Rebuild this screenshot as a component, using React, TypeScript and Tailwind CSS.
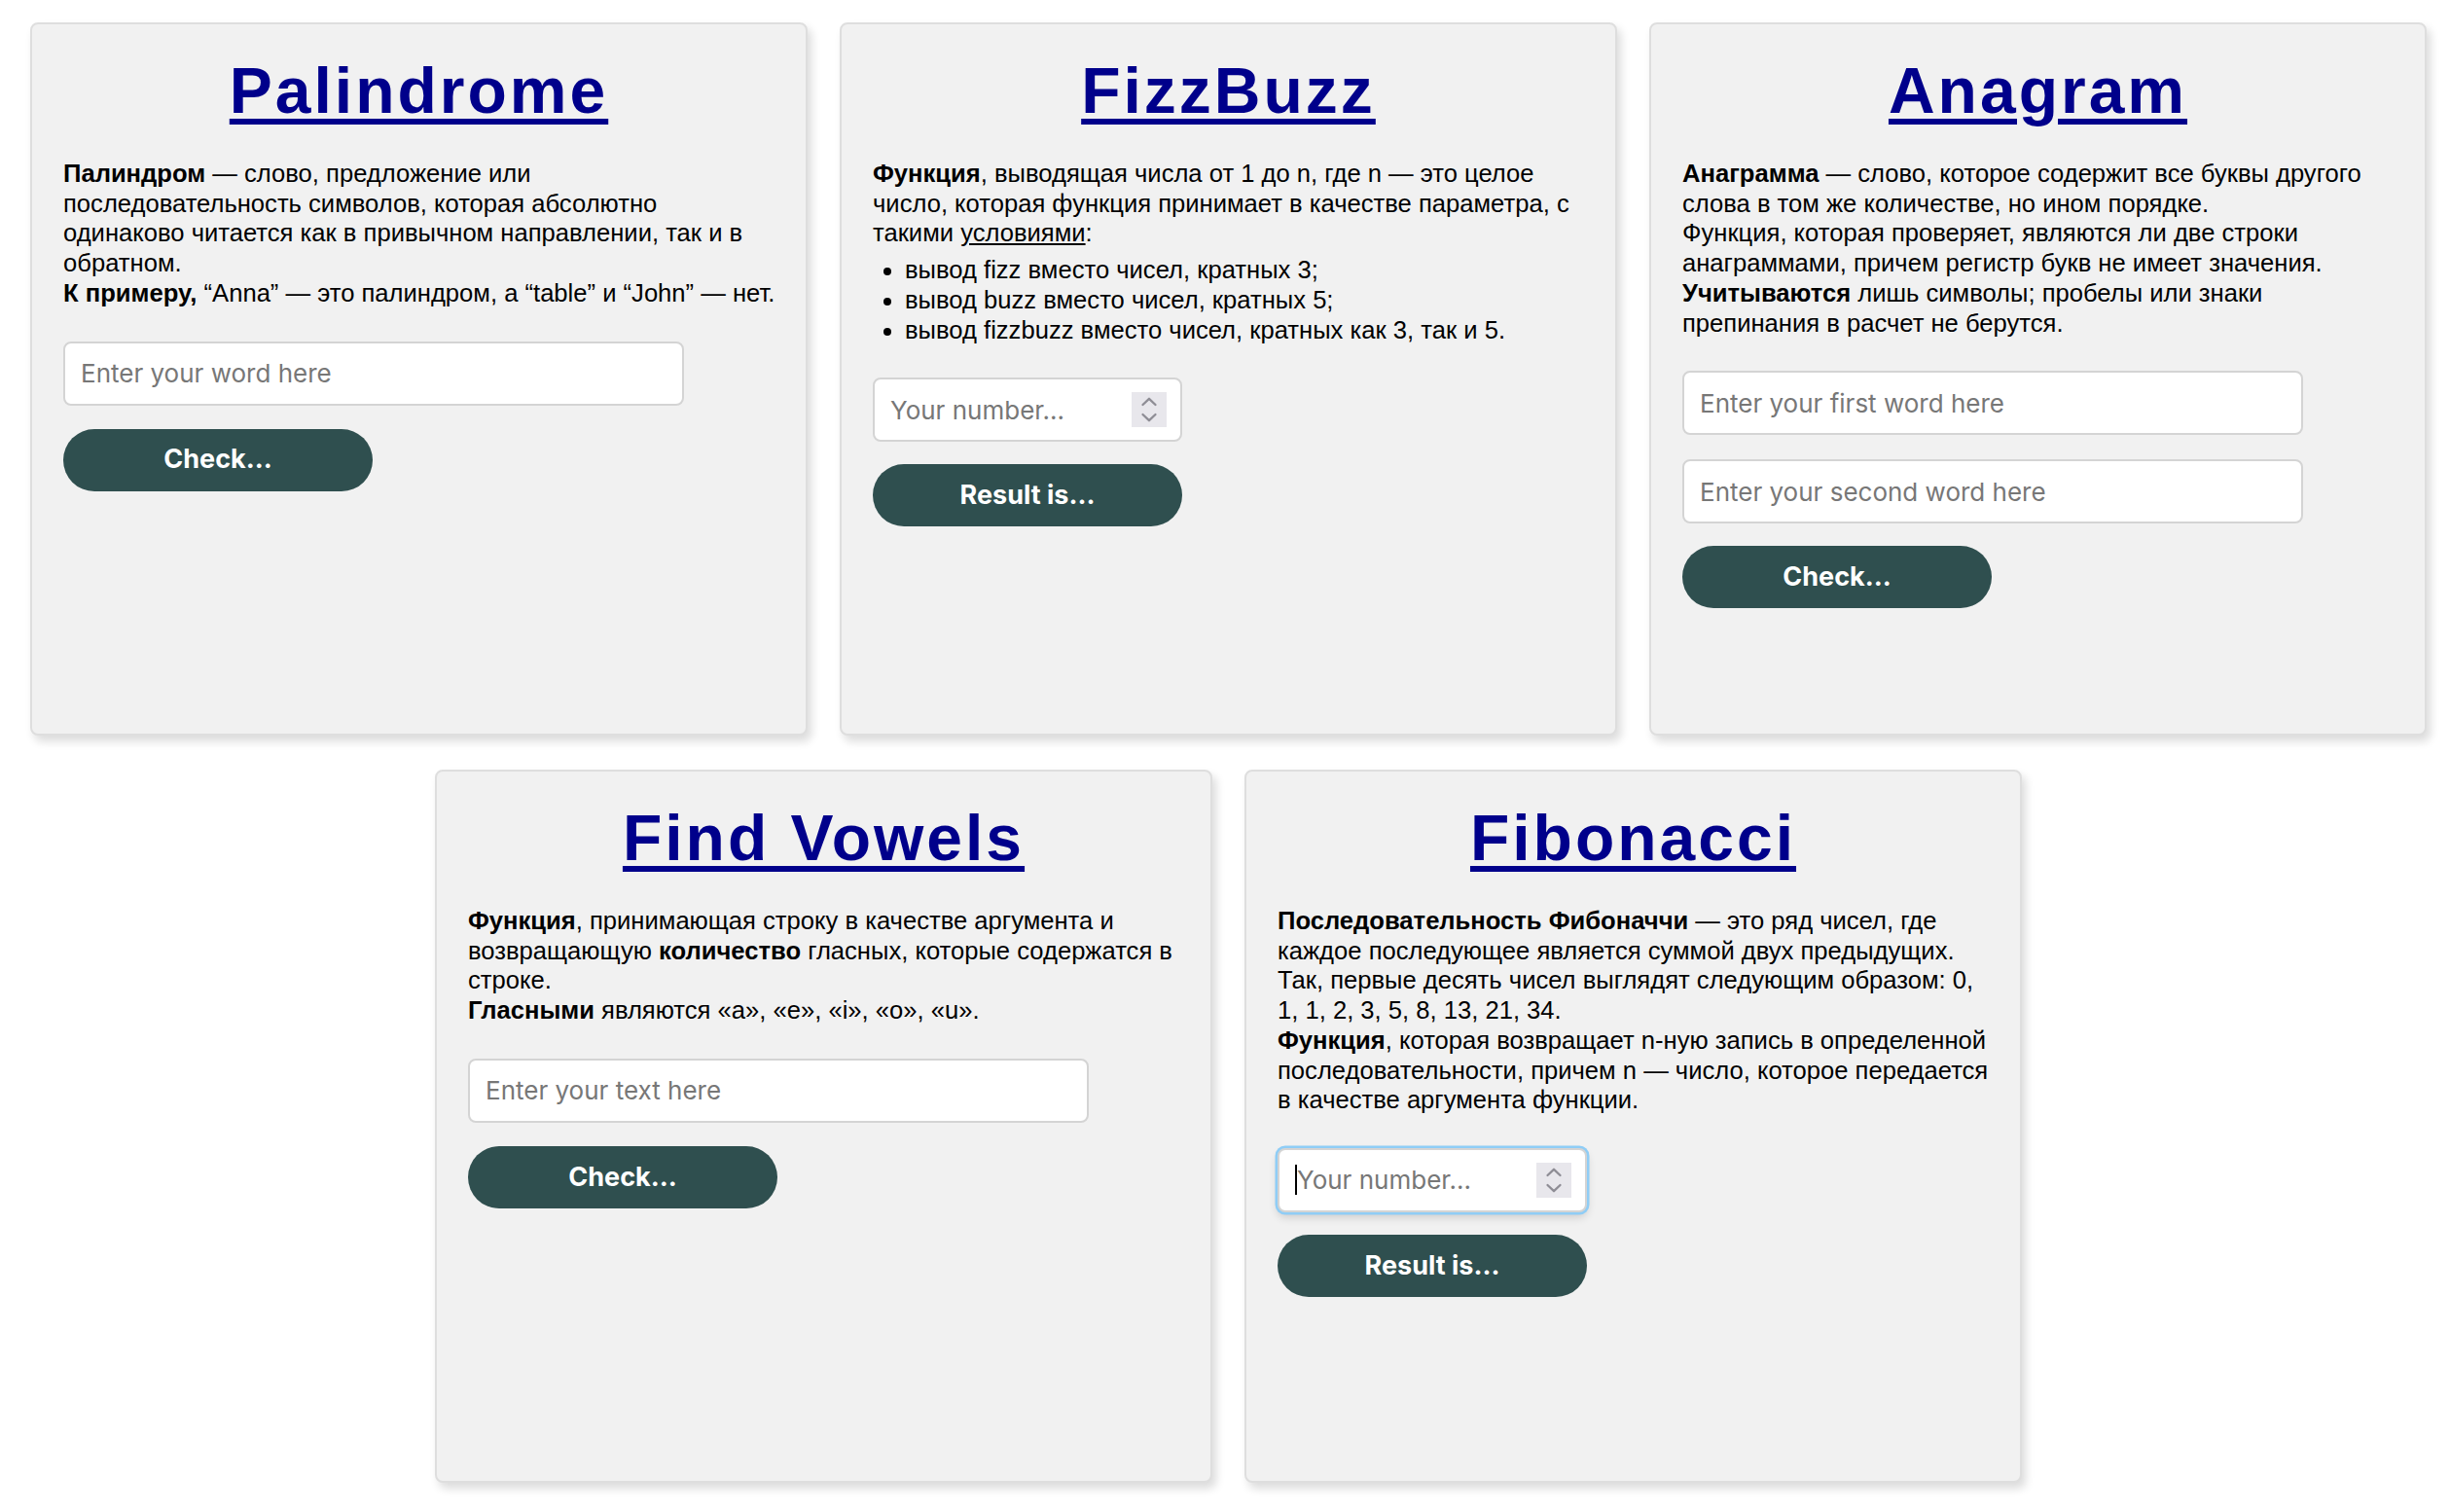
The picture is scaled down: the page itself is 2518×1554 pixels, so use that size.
import React from "react";

function Title({ children }: { children: React.ReactNode }) {
  return (
    <h1 className="text-center text-[66px] leading-[76px] font-bold tracking-[3px] text-[#00008b] font-['Liberation_Sans',Arial,sans-serif]">
      <a
        href="#"
        className="underline decoration-[length:6px] underline-offset-[6px] text-[#00008b]"
      >
        {children}
      </a>
    </h1>
  );
}

function Card({ children }: { children: React.ReactNode }) {
  return (
    <div className="w-[799px] h-[733px] shrink-0 bg-[#f1f1f1] border-2 border-[#dedede] rounded-[8px] shadow-[4px_6px_10px_rgba(0,0,0,0.14)] px-[32px] pt-[30px] font-['Liberation_Sans',Arial,sans-serif] text-black">
      {children}
    </div>
  );
}

function Para({ children, className = "" }: { children: React.ReactNode; className?: string }) {
  return <p className={"mt-[32px] text-[25.6px] leading-[30.7px] " + className}>{children}</p>;
}

function TextInput({ placeholder, className = "" }: { placeholder: string; className?: string }) {
  return (
    <input
      type="text"
      placeholder={placeholder}
      className={
        "block w-[638px] h-[66px] rounded-[8px] border-2 border-[#d4d4d4] bg-white px-[16px] text-[26px] font-['Inter',sans-serif] text-black placeholder:text-[#777777] outline-none " +
        className
      }
    />
  );
}

function Spinner() {
  return (
    <svg width="36" height="36" viewBox="0 0 36 36" className="shrink-0">
      <rect x="0" y="0" width="36" height="36" fill="#e8e7ec" />
      <path d="M11.5 13 L18 6.8 L24.5 13" fill="none" stroke="#8e8d95" strokeWidth="2.3" strokeLinecap="round" strokeLinejoin="round" />
      <path d="M11.5 23 L18 29.2 L24.5 23" fill="none" stroke="#8e8d95" strokeWidth="2.3" strokeLinecap="round" strokeLinejoin="round" />
    </svg>
  );
}

function NumberInput({ focused = false, className = "" }: { focused?: boolean; className?: string }) {
  return (
    <div
      className={
        "flex items-center w-[318px] h-[66px] rounded-[8px] border-2 border-[#d4d4d4] bg-white pl-[16px] pr-[14px] " +
        (focused ? "shadow-[0_0_0_2.5px_#8fcdf6,0_5px_10px_rgba(0,0,0,0.16)] " : "") +
        className
      }
    >
      {focused && <span className="block w-[2px] h-[31px] bg-black shrink-0" />}
      <input
        type="text"
        inputMode="numeric"
        placeholder="Your number..."
        className="min-w-0 flex-1 h-full bg-transparent text-[26px] font-['Inter',sans-serif] text-black placeholder:text-[#777777] outline-none"
      />
      <Spinner />
    </div>
  );
}

function Btn({ children, className = "" }: { children: React.ReactNode; className?: string }) {
  return (
    <button
      type="button"
      className={
        "block w-[318px] h-[64px] rounded-full bg-[#2f4f4f] text-white font-bold text-[27px] font-['Inter',sans-serif] " +
        className
      }
    >
      {children}
    </button>
  );
}

export default function App() {
  return (
    <div className="min-h-screen bg-white pt-[23px] pb-[30px] pl-[31px] pr-[24px] flex flex-wrap justify-center gap-x-[33px] gap-y-[35px]">
      <Card>
        <Title>Palindrome</Title>
        <Para>
          <b>Палиндром</b> — слово, предложение или последовательность символов, которая абсолютно одинаково
          читается как в привычном направлении, так и в обратном.
          <br />
          <span className="whitespace-nowrap">
            <b>К примеру,</b> “Anna” — это палиндром, а “table” и “John” — нет.
          </span>
        </Para>
        <TextInput placeholder="Enter your word here" className="mt-[34px]" />
        <Btn className="mt-[24px]">Check...</Btn>
      </Card>

      <Card>
        <Title>FizzBuzz</Title>
        <Para>
          <b>Функция</b>, выводящая числа от 1 до n, где n — это целое число, которая функция принимает в
          качестве параметра, с такими <u>условиями</u>:
        </Para>
        <ul className="mt-[7px] list-disc pl-[33px] text-[25.6px] leading-[30.7px]">
          <li>вывод fizz вместо чисел, кратных 3;</li>
          <li>вывод buzz вместо чисел, кратных 5;</li>
          <li>вывод fizzbuzz вместо чисел, кратных как 3, так и 5.</li>
        </ul>
        <NumberInput className="mt-[34px]" />
        <Btn className="mt-[23px]">Result is...</Btn>
      </Card>

      <Card>
        <Title>Anagram</Title>
        <Para>
          <b>Анаграмма</b> — слово, которое содержит все буквы другого слова в том же количестве, но ином
          порядке.
          <br />
          Функция, которая проверяет, являются ли две строки анаграммами, причем регистр букв не имеет
          значения.
          <br />
          <b>Учитываются</b> лишь символы; пробелы или знаки препинания в расчет не берутся.
        </Para>
        <TextInput placeholder="Enter your first word here" className="mt-[34px]" />
        <TextInput placeholder="Enter your second word here" className="mt-[25px]" />
        <Btn className="mt-[23px]">Check...</Btn>
      </Card>

      <Card>
        <Title>Find Vowels</Title>
        <Para>
          <b>Функция</b>, принимающая строку в качестве аргумента и возвращающую <b>количество</b> гласных,
          которые содержатся в строке.
          <br />
          <b>Гласными</b> являются «a», «e», «i», «o», «u».
        </Para>
        <TextInput placeholder="Enter your text here" className="mt-[34px]" />
        <Btn className="mt-[24px]">Check...</Btn>
      </Card>

      <Card>
        <Title>Fibonacci</Title>
        <Para>
          <b>Последовательность Фибоначчи</b> — это ряд чисел, где каждое последующее является суммой двух
          предыдущих. Так, первые десять чисел выглядят следующим образом: 0, 1, 1, 2, 3, 5, 8, 13, 21, 34.
          <br />
          <b>Функция</b>, которая возвращает n-ную запись в определенной последовательности, причем n —
          число, которое передается в качестве аргумента функции.
        </Para>
        <NumberInput focused className="mt-[34px]" />
        <Btn className="mt-[23px]">Result is...</Btn>
      </Card>
    </div>
  );
}
